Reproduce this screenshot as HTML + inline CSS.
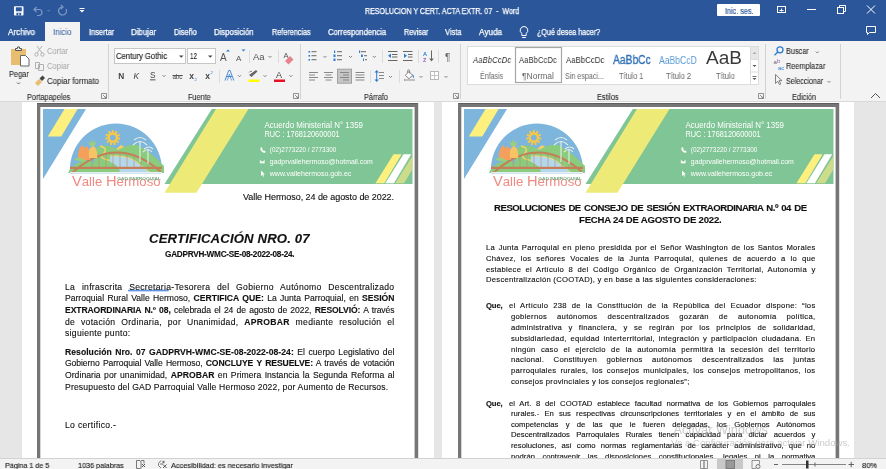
<!DOCTYPE html>
<html><head><meta charset="utf-8">
<style>
*{margin:0;padding:0;box-sizing:border-box}
html,body{width:886px;height:469px;overflow:hidden;background:#e6e6e6;font-family:"Liberation Sans",sans-serif}
.a{position:absolute;white-space:nowrap;will-change:transform}
.tab{color:#fff;font-size:9px;top:27px}
.rl{color:#444;font-size:9px}
.gl{color:#444;font-size:9px;top:91px}
.st{color:#444;font-size:8.5px;top:459px;line-height:11px}
.dl,.dj{position:absolute;white-space:nowrap;line-height:12px;color:#111;will-change:transform;-webkit-text-stroke:0.12px #111}
.dj{text-align:justify;text-align-last:justify}
b{font-weight:bold;color:#111}
u.sq{text-decoration:none}
</style></head><body>
<div id="root" style="position:absolute;left:0;top:0;width:886px;height:469px;will-change:transform"><!-- TITLE BAR -->
<div class="a" style="left:0;top:0;width:886px;height:41px;background:#2b579a"></div>
<svg class="a" style="left:0;top:0" width="886" height="41">
 <!-- save -->
 <rect x="14" y="6.2" width="9.5" height="9.3" rx="0.8" fill="#fff"/>
 <rect x="15.8" y="7.3" width="6" height="4" fill="#2b579a"/>
 <rect x="16.4" y="12.8" width="4.8" height="2.7" fill="#2b579a"/>
 <rect x="18" y="13.5" width="1.5" height="1.2" fill="#fff"/>
 <!-- undo -->
 <g fill="none" stroke="#7f9bc5" stroke-width="1.2">
  <path d="M34 9.5h5a3 3 0 0 1 0 6h-2M36.5 7l-2.5 2.5 2.5 2.5"/>
  <path d="M47.5 10l1.2 1.2 1.2-1.2" stroke-width="0.8"/>
  <path d="M66 9A4 4 0 1 1 62.5 7M60.8 4.8l2.2 2.2-2.2 2.2"/>
 </g>
 <g fill="#fff"><path d="M79.5 10h5l-2.5 2.5z"/><rect x="79.5" y="8" width="5" height="1"/></g>
 <!-- signin btn -->
 <rect x="717" y="4" width="43" height="12" rx="1" fill="#fff"/>
 <!-- window btns -->
 <g fill="none" stroke="#fff" stroke-width="1">
  <rect x="777.5" y="6.5" width="8" height="6"/>
  <path d="M779.5 10.5h4M781.5 8.5v3"/>
  <path d="M807 9.5h9"/>
  <rect x="837.5" y="7.5" width="6" height="6"/><path d="M839.5 7.5v-2h6v6h-2"/>
  <path d="M867 5.5l8 8M875 5.5l-8 8"/>
  <path d="M866.5 26.5h9v6h-6l-2 2v-2h-1z"/>
 </g>
</svg>
<!-- TABS -->
<div class="a" style="left:45px;top:22px;width:35px;height:20px;background:#f3f3f3"></div>
<svg class="a" style="left:518px;top:25px" width="12" height="14"><g fill="none" stroke="#fff" stroke-width="1"><path d="M6 1.5a3.8 3.8 0 0 0 -2.2 6.9v2.1h4.4v-2.1a3.8 3.8 0 0 0 -2.2 -6.9z"/><path d="M4.2 12.5h3.6"/></g></svg>
<!-- RIBBON -->
<div class="a" style="left:0;top:41px;width:886px;height:61px;background:#f3f3f3;border-bottom:1px solid #d8d8d8"></div>
<svg class="a" style="left:0;top:0" width="886" height="101">
 <g fill="#d2d2d2"><rect x="108" y="44" width="1" height="55"/><rect x="300" y="44" width="1" height="55"/><rect x="460" y="44" width="1" height="55"/><rect x="765" y="44" width="1" height="55"/><rect x="840" y="44" width="1" height="55"/></g>
 <g fill="#dcdcdc"><rect x="249" y="50" width="1" height="13"/><rect x="278" y="50" width="1" height="13"/><rect x="219" y="70" width="1" height="13"/><rect x="382" y="50" width="1" height="13"/><rect x="418" y="50" width="1" height="13"/><rect x="438" y="50" width="1" height="13"/><rect x="370" y="70" width="1" height="13"/><rect x="399" y="70" width="1" height="13"/></g>
 <!-- clipboard -->
 <rect x="11" y="49" width="15" height="16" fill="#e9bd6f"/>
 <path d="M15.5 50.5v-2h2v-1.5h2v1.5h2v2z" fill="#f3f3f3" stroke="#555" stroke-width="1"/>
 <path d="M20.5 55.5h5l3.5 3.5v7h-8.5z" fill="#fff" stroke="#666" stroke-width="1"/>
 <path d="M17 82.5l1.5 1.5 1.5-1.5" fill="none" stroke="#555" stroke-width="0.9"/>
 <!-- cut -->
 <g fill="none" stroke="#b0b0b0" stroke-width="1">
  <path d="M37 46l5 7M42 46l-5 7"/><circle cx="36.5" cy="54.5" r="1.7"/><circle cx="42.5" cy="54.5" r="1.7"/>
  <path d="M35.5 62.5h4v6h-4z M38.5 64.5h5v6h-5z"/>
 </g>
 <path d="M35 83l4-4 3 3-4 4z" fill="#e9bd6f"/><path d="M39.5 78.5l3-3 2.5 2.5-3 3z" fill="#444"/>
 <!-- font boxes -->
 <rect x="114.5" y="48.5" width="71" height="15" fill="#fff" stroke="#c6c6c6"/>
 <rect x="187.5" y="48.5" width="28" height="15" fill="#fff" stroke="#c6c6c6"/>
 <g fill="#444"><path d="M179 55.5h4.5l-2.25 2.25z"/><path d="M208 55.5h4.5l-2.25 2.25z"/></g>
 <!-- fuente row1 -->
 <g font-family="Liberation Sans" fill="#555">
  <text x="220" y="61" font-size="10">A</text>
  <text x="236" y="61" font-size="8">A</text>
  <text x="253" y="60" font-size="9.5">Aa</text>
  <text x="283.5" y="58" font-size="7.5">A</text>
 </g>
 <g fill="#2b7cd3"><path d="M226 51.5l2-2 2 2z"/><path d="M241.5 49.5h4l-2 2z"/></g>
 <path d="M285 61l5-5 3.5 3.5-5 5z" fill="#e8828c"/>
 <!-- fuente row2 -->
 <g font-family="Liberation Sans" fill="#444">
  <text x="118.3" y="78.6" font-size="8.3" font-weight="bold">N</text>
  <text x="133.5" y="78.6" font-size="8.3" font-style="italic">K</text>
  <text x="150" y="78.4" font-size="8.3">S</text>
  <text x="172.4" y="78.6" font-size="6.6" textLength="10" lengthAdjust="spacingAndGlyphs">abc</text>
  <text x="189.3" y="78.8" font-size="8.5" font-weight="bold">x</text>
  <text x="205.3" y="78.8" font-size="8.5" font-weight="bold">x</text>
  <text x="276" y="78" font-size="9">A</text>
 </g>
 <rect x="150" y="79.4" width="5.5" height="0.9" fill="#444"/>
 <rect x="172.4" y="75.2" width="10.4" height="0.8" fill="#444"/>
 <g font-family="Liberation Sans" fill="#2b7cd3" font-size="4"><text x="194.6" y="80.8">2</text><text x="210.6" y="74">2</text></g>
 <path d="M225 80.5l3.7-10h1.4l3.7 10M226.6 76.5h5.6" fill="none" stroke="#3c7fd0" stroke-width="0.9"/><path d="M227.2 80.5l2.2-6.3 2.2 6.3" fill="none" stroke="#3c7fd0" stroke-width="0.7"/>
 <path d="M249 75l7-5 1.5 1.5-6 5.5z" fill="#666"/><path d="M249 72.5q1-2 3-1" stroke="#666" fill="none" stroke-width="0.8"/>
 <rect x="248.5" y="79.5" width="11" height="2.5" fill="#ffff00"/>
 <rect x="274" y="79.5" width="11" height="2.5" fill="#e81123"/>
 <g fill="none" stroke="#666" stroke-width="0.8">
  <path d="M162.5 75.2l1.5 1.5 1.5-1.5M238 75.2l1.5 1.5 1.5-1.5M263.5 75.2l1.5 1.5 1.5-1.5M289.3 75.2l1.5 1.5 1.5-1.5M268.5 56l1.5 1.5 1.5-1.5"/>
  <path d="M323.5 56l1.5 1.5 1.5-1.5M349 56l1.5 1.5 1.5-1.5M372.8 56l1.5 1.5 1.5-1.5M389 76l1.5 1.5 1.5-1.5M419.5 76l1.5 1.5 1.5-1.5M444.5 76l1.5 1.5 1.5-1.5M815.8 51.5l1.5 1.5 1.5-1.5M827.5 81l1.5 1.5 1.5-1.5"/>
  <!-- launchers -->
  <path d="M101.5 93.5h5v5h-5zM103 95l3 3M106 96.5v1.5h-1.5" stroke="#777"/>
  <path d="M293.5 93.5h5v5h-5zM295 95l3 3M298 96.5v1.5h-1.5" stroke="#777"/>
  <path d="M453.5 93.5h5v5h-5zM455 95l3 3M458 96.5v1.5h-1.5" stroke="#777"/>
  <path d="M758.5 93.5h5v5h-5zM760 95l3 3M763 96.5v1.5h-1.5" stroke="#777"/>
  <path d="M871 98l4.5-4.5 4.5 4.5" stroke="#555" stroke-width="1"/>
 </g>
 <!-- parrafo row1 -->
 <g fill="#2b7cd3">
  <rect x="308.5" y="51" width="1.6" height="1.6"/><rect x="308.5" y="55" width="1.6" height="1.6"/><rect x="308.5" y="59" width="1.6" height="1.6"/>
  <rect x="334" y="50.5" width="1.2" height="2.5"/><rect x="333.5" y="54.5" width="2" height="2.5"/><rect x="333.5" y="58.5" width="2" height="2.5"/>
  <rect x="359" y="50.5" width="1.2" height="2.5"/><rect x="361" y="54.5" width="1.8" height="2.5"/><rect x="363" y="58.5" width="1" height="2.5"/>
  <path d="M388 55.8l3-2.3v4.6z"/><path d="M407 55.8l-3-2.3v4.6z"/>
  <text x="423" y="56" font-family="Liberation Sans" font-size="5.5" font-weight="bold">A</text>
 </g>
 <text x="423" y="62" font-family="Liberation Sans" font-size="5.5" font-weight="bold" fill="#9b59b6">Z</text>
 <g fill="#666">
  <rect x="311.5" y="51.2" width="5" height="1"/><rect x="311.5" y="55.2" width="5" height="1"/><rect x="311.5" y="59.2" width="5" height="1"/>
  <rect x="337" y="51.2" width="5" height="1"/><rect x="337" y="55.2" width="5" height="1"/><rect x="337" y="59.2" width="5" height="1"/>
  <rect x="361" y="51.2" width="5" height="1"/><rect x="364" y="55.2" width="3" height="1"/><rect x="365" y="59.2" width="2" height="1"/>
  <rect x="388" y="51" width="9.5" height="1"/><rect x="392" y="54" width="5.5" height="1"/><rect x="392" y="56.5" width="5.5" height="1"/><rect x="388" y="60" width="9.5" height="1"/>
  <rect x="403" y="51" width="9.5" height="1"/><rect x="408" y="54" width="4.5" height="1"/><rect x="408" y="56.5" width="4.5" height="1"/><rect x="403" y="60" width="9.5" height="1"/>
  <rect x="431" y="50.5" width="1" height="10"/><path d="M429.2 58.5l2.3 3 2.3-3z"/>
  <text x="445" y="61" font-family="Liberation Sans" font-size="10">¶</text>
 </g>
 <!-- parrafo row2 -->
 <rect x="337.5" y="69.2" width="14" height="14" fill="#c6c6c6" stroke="#a0a0a0"/>
 <g fill="#888">
  <rect x="309" y="72" width="9" height="1"/><rect x="309" y="74.5" width="6" height="1"/><rect x="309" y="77" width="9" height="1"/><rect x="309" y="79.5" width="6" height="1"/>
  <rect x="324" y="72" width="9" height="1"/><rect x="325.5" y="74.5" width="6" height="1"/><rect x="324" y="77" width="9" height="1"/><rect x="325.5" y="79.5" width="6" height="1"/>
  <rect x="340" y="72" width="9" height="1"/><rect x="343" y="74.5" width="6" height="1"/><rect x="340" y="77" width="9" height="1"/><rect x="343" y="79.5" width="6" height="1"/>
  <rect x="355.5" y="72" width="9" height="1"/><rect x="355.5" y="74.5" width="9" height="1"/><rect x="355.5" y="77" width="9" height="1"/><rect x="355.5" y="79.5" width="9" height="1"/>
  <rect x="379" y="72" width="5" height="1"/><rect x="379" y="75" width="5" height="1"/><rect x="379" y="78" width="5" height="1"/>
  <rect x="430.5" y="71.5" width="8" height="8" fill="#fff" stroke="#b0b0b0" stroke-width="0.9"/><rect x="434.2" y="71.5" width="0.8" height="8" fill="#b8b8b8"/><rect x="430.5" y="75.2" width="8" height="0.8" fill="#b8b8b8"/>
 </g>
 <g fill="#2b7cd3"><rect x="376.2" y="72" width="1" height="8"/><path d="M374.5 72.5l2.2-2.5 2.2 2.5zM374.5 79.5l2.2 2.5 2.2-2.5z"/></g>
 <path d="M405.3 75.2L409 71.6L412.6 75.2L409 78.8Z" fill="#fff" stroke="#666" stroke-width="0.8"/><path d="M407.6 73v-2.2a1 1 0 0 1 2 0v2.6" fill="none" stroke="#666" stroke-width="0.7"/><path d="M412.8 74.3q2.2 2.2 0.8 4.2q-1.6-1.4-0.8-4.2z" fill="#2b7cd3"/>
 <rect x="404.5" y="79.3" width="10" height="1.4" fill="#fff" stroke="#999" stroke-width="0.6"/>
 <!-- styles gallery -->
 <rect x="467.5" y="46.5" width="291" height="38" fill="#fff" stroke="#dcdcdc"/>
 <rect x="515.5" y="47.5" width="46" height="35" fill="#fff" stroke="#a6a6a6" stroke-width="1.2"/>
 <rect x="750" y="47" width="8" height="12.5" fill="#e6e6e6"/>
 <path d="M750.5 47v37" stroke="#dcdcdc"/><path d="M750.5 59.5h8M750.5 72h8" stroke="#dcdcdc"/>
 <g fill="#555"><path d="M752.5 65h4l-2 2z"/><rect x="752.5" y="76" width="4" height="0.8"/><path d="M752.5 78h4l-2 2z"/></g>
 <path d="M752.5 54l2-2 2 2z" fill="#aaa"/>
 <!-- edicion icons -->
 <g fill="none" stroke="#2b7cd3" stroke-width="1.3"><circle cx="780" cy="49.8" r="3"/><path d="M777.8 52l-3.3 3.3"/></g>
 <g font-family="Liberation Sans" font-size="6"><text x="773.5" y="64" fill="#666">a</text><text x="777" y="63" fill="#9b59b6">b</text><text x="778" y="70" fill="#2b7cd3">ac</text></g>
 <path d="M775.5 74.5v9l2.2-2.2 1.8 3.3 1.3-0.7-1.8-3.2h3z" fill="#f3f3f3" stroke="#666" stroke-width="0.8"/>
</svg>
<!-- DOCUMENT AREA -->
<div class="a" style="left:0;top:102px;width:886px;height:356px;background:#e6e6e6"></div>
<div class="a" style="left:21.5px;top:102px;width:411.5px;height:356px;background:#fff"></div>
<div class="a" style="left:442px;top:102px;width:411.5px;height:356px;background:#fff"></div>
<svg class="a" style="left:0;top:0" width="886" height="458">
<defs><clipPath id="lc"><rect x="60" y="110" width="110" height="63.5"/></clipPath></defs>
<g>
 <path d="M37 103H418.2V470H414.6V107H40.3V470H37Z" fill="#767676"/><path d="M37.5 103.5H417.7" stroke="#5e5e5e" stroke-width="1" fill="none"/>
 <path d="M43 109H86L43 179Z" fill="#7db5dc"/>
 <path d="M64.5 109H77.6L61.3 136.5H47.8Z" fill="#fdf07e"/>
 <path d="M211.8 109H412.5V184.1H164.5Z" fill="#80c595"/>
 <path d="M216 109H248.5L196.5 192.7H164.5Z" fill="#eeea78"/>
 <path d="M393.5 154.3H401.6L384.3 183.2H375.4Z" fill="#fdf07e"/>
 <path d="M403.5 154.3H411.2L393.9 183.2H385.3Z" fill="#fff"/>
 <path d="M412.5 156V169L404.1 183.2H395.2Z" fill="#cddc8a"/>
 <!-- logo -->
 
 <g clip-path="url(#lc)">
  <circle cx="115.9" cy="169.5" r="46" fill="#7db5dc"/>
  <path d="M115 150 L121 145 L128 149Z" fill="#f6cf63"/>
  <path d="M92 173 L97 147 Q107 143 118 150 Q128 144 137 145 Q151 152 164 166 V173Z" fill="#8acb7e"/>
  <path d="M68 173 Q72 162 90 159 L100 173Z" fill="#8acb7e"/>
  <path d="M100 146 Q108 148 104 153 Q98 158 108 160 Q118 161 120 166 Q122 170 128 174" fill="none" stroke="#f3d36a" stroke-width="1.5"/>
  <path d="M110 156 Q124 155 134 160 Q142 166 152 174 H120 Q121 166 110 162Z" fill="#b3d8ee"/>
  <path d="M110 156 Q124 155 134 160 Q142 166 152 174" fill="none" stroke="#f3d36a" stroke-width="1"/>
  <g stroke="#bc8a66" stroke-width="0.6" fill="none"><path d="M92 160V168M99 157V168M106 154V168M113 153V168M120 152V168M127 153V168M134 154V168M141 156V168M148 160V168"/></g>
  <path d="M71 174 Q116 132 161 172" fill="none" stroke="#c57e58" stroke-width="2"/>
  <rect x="70" y="166.8" width="92" height="2.2" fill="#c57e58"/>
  <rect x="70" y="172" width="92" height="2" fill="#e8f0f4"/>
  <path d="M78 160 Q77 150 82 145 Q85 150 87 146 Q91 150 90 160Z" fill="#f4a05c"/>
  <path d="M74 160 Q80 154 86 162Z" fill="#9ccf7c"/>
  <path d="M89 158 Q88 147 93 146 Q98 148 97 158Z" fill="#f7c465"/>
  <path d="M90 146 l-1.5-5 2.5 2 1.5-4 1.5 4 2-2 -1 5z" fill="#9ccf7c"/>
  <g stroke="#e6f0e2" stroke-width="1.1" fill="none"><path d="M140 162V141M134 140Q140 135 146 140M133 145Q140 138 147 145M148 164V149M144 149Q149 145 153 149M143 152Q148 147 152 152"/></g>
 </g>
 <circle cx="112.8" cy="137.6" r="4.2" fill="none" stroke="#f8c848" stroke-width="2.6"/>
 <circle cx="112.8" cy="137.6" r="6.5" fill="none" stroke="#f8c848" stroke-width="2" stroke-dasharray="2 1.6"/>
 <text x="72" y="186" font-family="Liberation Sans" fill="#f08a82" textLength="88.6" lengthAdjust="spacingAndGlyphs"><tspan font-size="14">V</tspan><tspan font-size="12.6">alle </tspan><tspan font-size="14">H</tspan><tspan font-size="12.6">ermoso</tspan></text>
 <text x="117.3" y="179.7" font-family="Liberation Sans" font-size="4.3" font-weight="bold" fill="#78ad84" textLength="43.5" lengthAdjust="spacingAndGlyphs">GAD PARROQUIAL</text>
 <!-- header text -->
 <g font-family="Liberation Sans" fill="#fff">
  <text x="264.5" y="127.7" font-size="9.4" textLength="98.5" lengthAdjust="spacingAndGlyphs">Acuerdo Ministerial N° 1359</text>
  <text x="264.5" y="137" font-size="9.4" textLength="75.1" lengthAdjust="spacingAndGlyphs">RUC : 1768120600001</text>
  <text x="269.8" y="152.3" font-size="6.6" textLength="66.5" lengthAdjust="spacingAndGlyphs">(02)2773220 / 2773300</text>
  <text x="269.8" y="164.1" font-size="6.6" textLength="103" lengthAdjust="spacingAndGlyphs">gadprvallehermoso@hotmail.com</text>
  <text x="269.8" y="175.9" font-size="6.6" textLength="81.6" lengthAdjust="spacingAndGlyphs">www.vallehermoso.gob.ec</text>
  <path d="M260.5 147.5q1-0.8 1.6 0.3l0.4 1q-0.5 0.6 0.2 1.4q0.8 0.8 1.4 0.3l1 0.5q1 0.6 0.2 1.5q-1.5 1-3.5-1q-2-2-1.3-4z"/>
  <path d="M259.8 159.5h5v4h-5z M259.8 159.5l2.5 2.2 2.5-2.2" stroke="#80c595" stroke-width="0.4"/>
  <path d="M261 170.5v5.5l1.3-1.3 1 2 0.8-0.4-1-2h1.8z"/>
 </g>
</g>

<g transform="translate(421,0)">
 <path d="M37 103H418.2V470H414.6V107H40.3V470H37Z" fill="#767676"/><path d="M37.5 103.5H417.7" stroke="#5e5e5e" stroke-width="1" fill="none"/>
 <path d="M43 109H86L43 179Z" fill="#7db5dc"/>
 <path d="M64.5 109H77.6L61.3 136.5H47.8Z" fill="#fdf07e"/>
 <path d="M211.8 109H412.5V184.1H164.5Z" fill="#80c595"/>
 <path d="M216 109H248.5L196.5 192.7H164.5Z" fill="#eeea78"/>
 <path d="M393.5 154.3H401.6L384.3 183.2H375.4Z" fill="#fdf07e"/>
 <path d="M403.5 154.3H411.2L393.9 183.2H385.3Z" fill="#fff"/>
 <path d="M412.5 156V169L404.1 183.2H395.2Z" fill="#cddc8a"/>
 <!-- logo -->
 
 <g clip-path="url(#lc)">
  <circle cx="115.9" cy="169.5" r="46" fill="#7db5dc"/>
  <path d="M115 150 L121 145 L128 149Z" fill="#f6cf63"/>
  <path d="M92 173 L97 147 Q107 143 118 150 Q128 144 137 145 Q151 152 164 166 V173Z" fill="#8acb7e"/>
  <path d="M68 173 Q72 162 90 159 L100 173Z" fill="#8acb7e"/>
  <path d="M100 146 Q108 148 104 153 Q98 158 108 160 Q118 161 120 166 Q122 170 128 174" fill="none" stroke="#f3d36a" stroke-width="1.5"/>
  <path d="M110 156 Q124 155 134 160 Q142 166 152 174 H120 Q121 166 110 162Z" fill="#b3d8ee"/>
  <path d="M110 156 Q124 155 134 160 Q142 166 152 174" fill="none" stroke="#f3d36a" stroke-width="1"/>
  <g stroke="#bc8a66" stroke-width="0.6" fill="none"><path d="M92 160V168M99 157V168M106 154V168M113 153V168M120 152V168M127 153V168M134 154V168M141 156V168M148 160V168"/></g>
  <path d="M71 174 Q116 132 161 172" fill="none" stroke="#c57e58" stroke-width="2"/>
  <rect x="70" y="166.8" width="92" height="2.2" fill="#c57e58"/>
  <rect x="70" y="172" width="92" height="2" fill="#e8f0f4"/>
  <path d="M78 160 Q77 150 82 145 Q85 150 87 146 Q91 150 90 160Z" fill="#f4a05c"/>
  <path d="M74 160 Q80 154 86 162Z" fill="#9ccf7c"/>
  <path d="M89 158 Q88 147 93 146 Q98 148 97 158Z" fill="#f7c465"/>
  <path d="M90 146 l-1.5-5 2.5 2 1.5-4 1.5 4 2-2 -1 5z" fill="#9ccf7c"/>
  <g stroke="#e6f0e2" stroke-width="1.1" fill="none"><path d="M140 162V141M134 140Q140 135 146 140M133 145Q140 138 147 145M148 164V149M144 149Q149 145 153 149M143 152Q148 147 152 152"/></g>
 </g>
 <circle cx="112.8" cy="137.6" r="4.2" fill="none" stroke="#f8c848" stroke-width="2.6"/>
 <circle cx="112.8" cy="137.6" r="6.5" fill="none" stroke="#f8c848" stroke-width="2" stroke-dasharray="2 1.6"/>
 <text x="72" y="186" font-family="Liberation Sans" fill="#f08a82" textLength="88.6" lengthAdjust="spacingAndGlyphs"><tspan font-size="14">V</tspan><tspan font-size="12.6">alle </tspan><tspan font-size="14">H</tspan><tspan font-size="12.6">ermoso</tspan></text>
 <text x="117.3" y="179.7" font-family="Liberation Sans" font-size="4.3" font-weight="bold" fill="#78ad84" textLength="43.5" lengthAdjust="spacingAndGlyphs">GAD PARROQUIAL</text>
 <!-- header text -->
 <g font-family="Liberation Sans" fill="#fff">
  <text x="264.5" y="127.7" font-size="9.4" textLength="98.5" lengthAdjust="spacingAndGlyphs">Acuerdo Ministerial N° 1359</text>
  <text x="264.5" y="137" font-size="9.4" textLength="75.1" lengthAdjust="spacingAndGlyphs">RUC : 1768120600001</text>
  <text x="269.8" y="152.3" font-size="6.6" textLength="66.5" lengthAdjust="spacingAndGlyphs">(02)2773220 / 2773300</text>
  <text x="269.8" y="164.1" font-size="6.6" textLength="103" lengthAdjust="spacingAndGlyphs">gadprvallehermoso@hotmail.com</text>
  <text x="269.8" y="175.9" font-size="6.6" textLength="81.6" lengthAdjust="spacingAndGlyphs">www.vallehermoso.gob.ec</text>
  <path d="M260.5 147.5q1-0.8 1.6 0.3l0.4 1q-0.5 0.6 0.2 1.4q0.8 0.8 1.4 0.3l1 0.5q1 0.6 0.2 1.5q-1.5 1-3.5-1q-2-2-1.3-4z"/>
  <path d="M259.8 159.5h5v4h-5z M259.8 159.5l2.5 2.2 2.5-2.2" stroke="#80c595" stroke-width="0.4"/>
  <path d="M261 170.5v5.5l1.3-1.3 1 2 0.8-0.4-1-2h1.8z"/>
 </g>
</g>

<rect x="128" y="289.7" width="40.7" height="1.7" fill="#6496e6"/>
</svg>
<div class="dl" style="left:242.60px;top:191.08px;font-size:9.0px;letter-spacing:-0.054px;">Valle Hermoso, 24 de agosto de 2022.</div>
<div class="dl" style="left:148.90px;top:233.23px;font-size:13.2px;letter-spacing:0.127px;font-weight:bold;font-style:italic;color:#111">CERTIFICACIÓN NRO. 07</div>
<div class="dl" style="left:164.70px;top:249.16px;font-size:8.2px;letter-spacing:-0.243px;font-weight:bold;color:#111">GADPRVH-WMC-SE-08-2022-08-24.</div>
<div class="dj" style="left:64.75px;top:280.62px;width:329.45px;font-size:8.6px;letter-spacing:0.298px;">La infrascrita <u class=sq>Secretaria</u>-Tesorera del Gobierno Autónomo Descentralizado</div>
<div class="dj" style="left:64.75px;top:292.32px;width:329.45px;font-size:8.6px;letter-spacing:-0.014px;">Parroquial Rural Valle Hermoso, <b>CERTIFICA QUE:</b> La Junta Parroquial, en <b>SESIÓN</b></div>
<div class="dj" style="left:64.75px;top:304.02px;width:329.45px;font-size:8.6px;letter-spacing:-0.101px;"><b>EXTRAORDINARIA N.º 08,</b> celebrada el 24 de agosto de 2022, <b>RESOLVIÓ:</b> A través</div>
<div class="dj" style="left:64.75px;top:315.72px;width:329.45px;font-size:8.6px;letter-spacing:0.298px;">de votación Ordinaria, por Unanimidad, <b>APROBAR</b> mediante resolución el</div>
<div class="dl" style="left:64.75px;top:327.42px;font-size:8.6px;letter-spacing:0.298px;">siguiente punto:</div>
<div class="dj" style="left:64.75px;top:345.62px;width:329.45px;font-size:8.6px;letter-spacing:0.042px;"><b>Resolución Nro. 07 GADPRVH-WMC-SE-08-2022-08-24:</b> El cuerpo Legislativo del</div>
<div class="dj" style="left:64.75px;top:357.37px;width:329.45px;font-size:8.6px;letter-spacing:-0.087px;">Gobierno Parroquial Valle Hermoso, <b>CONCLUYE Y RESUELVE:</b> A través de votación</div>
<div class="dj" style="left:64.75px;top:369.12px;width:329.45px;font-size:8.6px;letter-spacing:0.036px;">Ordinaria por unanimidad, <b>APROBAR</b> en Primera Instancia la Segunda Reforma al</div>
<div class="dl" style="left:64.75px;top:380.87px;font-size:8.6px;letter-spacing:0.167px;">Presupuesto del GAD Parroquial Valle Hermoso 2022, por Aumento de Recursos.</div>
<div class="dl" style="left:64.75px;top:418.82px;font-size:8.6px;letter-spacing:0.317px;">Lo certifico.-</div>
<div class="dj" style="left:493.80px;top:202.37px;width:312.60px;font-size:9.6px;letter-spacing:-0.464px;font-weight:bold;color:#111">RESOLUCIONES DE CONSEJO DE SESIÓN EXTRAORDINARIA N.º 04 DE</div>
<div class="dl" style="left:579.00px;top:214.07px;font-size:9.6px;letter-spacing:-0.219px;font-weight:bold;color:#111">FECHA 24 DE AGOSTO DE 2022.</div>
<div class="dj" style="left:486.10px;top:242.23px;width:329.50px;font-size:7.7px;letter-spacing:0.241px;">La Junta Parroquial en pleno presidida por el Señor Washington de los Santos Morales</div>
<div class="dj" style="left:486.10px;top:252.93px;width:329.50px;font-size:7.7px;letter-spacing:0.251px;">Chávez, los señores Vocales de la Junta Parroquial, quienes de acuerdo a lo que</div>
<div class="dj" style="left:486.10px;top:263.63px;width:329.50px;font-size:7.7px;letter-spacing:0.251px;">establece el Artículo 8 del Código Orgánico de Organización Territorial, Autonomía y</div>
<div class="dl" style="left:486.10px;top:274.33px;font-size:7.7px;letter-spacing:0.251px;">Descentralización (COOTAD), y en base a las siguientes consideraciones:</div>
<div class="dl" style="left:486.00px;top:300.43px;font-size:7.7px;letter-spacing:-0.148px;font-weight:bold;color:#111">Que,</div>
<div class="dj" style="left:508.80px;top:300.43px;width:306.50px;font-size:7.7px;letter-spacing:0.261px;">el Artículo 238 de la Constitución de la República del Ecuador dispone: “los</div>
<div class="dj" style="left:510.90px;top:311.23px;width:304.40px;font-size:7.7px;letter-spacing:0.261px;">gobiernos autónomos descentralizados gozarán de autonomía política,</div>
<div class="dj" style="left:510.90px;top:322.03px;width:304.40px;font-size:7.7px;letter-spacing:0.261px;">administrativa y financiera, y se regirán por los principios de solidaridad,</div>
<div class="dj" style="left:510.90px;top:332.83px;width:304.40px;font-size:7.7px;letter-spacing:0.261px;">subsidiariedad, equidad interterritorial, integración y participación ciudadana. En</div>
<div class="dj" style="left:510.90px;top:343.63px;width:304.40px;font-size:7.7px;letter-spacing:0.261px;">ningún caso el ejercicio de la autonomía permitirá la secesión del territorio</div>
<div class="dj" style="left:510.90px;top:354.43px;width:304.40px;font-size:7.7px;letter-spacing:0.261px;">nacional. Constituyen gobiernos autónomos descentralizados las juntas</div>
<div class="dj" style="left:510.90px;top:365.23px;width:304.40px;font-size:7.7px;letter-spacing:0.261px;">parroquiales rurales, los consejos municipales, los consejos metropolitanos, los</div>
<div class="dl" style="left:510.90px;top:376.03px;font-size:7.7px;letter-spacing:0.261px;">consejos provinciales y los consejos regionales”;</div>
<div class="dl" style="left:486.00px;top:397.53px;font-size:7.7px;letter-spacing:-0.148px;font-weight:bold;color:#111">Que,</div>
<div class="dj" style="left:508.80px;top:397.53px;width:306.50px;font-size:7.7px;letter-spacing:0.000px;">el Art. 8 del COOTAD establece facultad normativa de los Gobiernos parroquiales</div>
<div class="dj" style="left:510.90px;top:408.13px;width:304.40px;font-size:7.7px;letter-spacing:0.000px;">rurales.- En sus respectivas circunscripciones territoriales y en el ámbito de sus</div>
<div class="dj" style="left:510.90px;top:418.73px;width:304.40px;font-size:7.7px;letter-spacing:0.000px;">competencias y de las que le fueren delegadas, los Gobiernos Autónomos</div>
<div class="dj" style="left:510.90px;top:429.33px;width:304.40px;font-size:7.7px;letter-spacing:0.000px;">Descentralizados Parroquiales Rurales tienen capacidad para dictar acuerdos y</div>
<div class="dj" style="left:510.90px;top:439.93px;width:304.40px;font-size:7.7px;letter-spacing:0.000px;">resoluciones, así como normas reglamentarias de carácter administrativo, que no</div>
<div class="dj" style="left:510.90px;top:450.53px;width:304.40px;font-size:7.7px;letter-spacing:0.000px;">podrán contravenir las disposiciones constitucionales, legales ni la normativa</div><svg class="a" style="left:0;top:0" width="886" height="458"><g font-family="Liberation Sans" fill="#a0a0a0" fill-opacity="0.55">
 <text x="673.4" y="433.7" font-size="12.6" textLength="94.4" lengthAdjust="spacingAndGlyphs">Activar Windows</text>
 <text x="671" y="446" font-size="8.6" textLength="179" lengthAdjust="spacingAndGlyphs">Ve a Configuración para activar Windows.</text>
</g>
</svg>
<!-- STATUS BAR -->
<div class="a" style="left:0;top:458px;width:886px;height:11px;background:#f3f3f3;border-top:1px solid #d2d2d2"></div>
<div class="a" style="left:717px;top:459px;width:25.5px;height:10px;background:#c8c8c8"></div>
<svg class="a" style="left:0;top:458px" width="886" height="11">
 <g fill="none" stroke="#6a6a6a" stroke-width="0.9">
  <path d="M136.5 2.5h3.5l1 1v7M140.5 3.5l1-1h2.5v3M136.5 2.5v8h4"/>
  <path d="M142 6l3 3M145 6l-3 3" stroke="#444"/>
  <path d="M161 2.5l-2.5 3v2l2.5 2.5M160 6h3"/>
  <circle cx="163.5" cy="4" r="0.8" fill="#444"/>
  <path d="M163 6.5l3.5 3.5M166.5 6.5l-3.5 3.5" stroke="#444"/>
  <path d="M700.5 2.5h3.5v8h-3.5zM704 2.5h3.5v8h-3.5z" stroke="#888"/>
  <rect x="726" y="2.5" width="8.5" height="8" fill="#999" stroke="#777"/>
  <path d="M752 2.5h7.5v4M752 2.5v8h4" stroke="#888"/>
  <circle cx="758" cy="8.5" r="2" stroke="#666"/>
  <path d="M774 6.5h4M848.5 6.5h5.5M851.2 3.8v5.5" stroke="#555"/>
  <path d="M782 6.5h64" stroke="#777"/>
 </g>
 <rect x="806" y="2.5" width="2.5" height="8" fill="#333"/>
 <rect x="814.5" y="4.5" width="1" height="4" fill="#666"/>
</svg>
<div class="a" style="left:365.20px;top:6.11px;line-height:12px;font-size:8.2px;color:#ffffff;transform:scaleX(0.861);transform-origin:0 0;-webkit-text-stroke:0.25px #fff">RESOLUCION Y CERT. ACTA EXTR. 07 &nbsp;- &nbsp;Word</div>
<div class="a" style="left:724.90px;top:5.11px;line-height:12px;font-size:8.5px;color:#2b579a;transform:scaleX(0.850);transform-origin:0 0;-webkit-text-stroke:0.15px #2b579a">Inic. ses.</div>
<div class="a" style="left:8.00px;top:26.21px;line-height:12px;font-size:8.3px;color:#ffffff;transform:scaleX(0.976);transform-origin:0 0;-webkit-text-stroke:0.25px #fff">Archivo</div>
<div class="a" style="left:52.50px;top:26.21px;line-height:12px;font-size:8.3px;color:#2b579a;transform:scaleX(0.955);transform-origin:0 0;">Inicio</div>
<div class="a" style="left:88.70px;top:26.21px;line-height:12px;font-size:8.3px;color:#ffffff;transform:scaleX(0.899);transform-origin:0 0;-webkit-text-stroke:0.25px #fff">Insertar</div>
<div class="a" style="left:131.40px;top:26.21px;line-height:12px;font-size:8.3px;color:#ffffff;transform:scaleX(0.951);transform-origin:0 0;-webkit-text-stroke:0.25px #fff">Dibujar</div>
<div class="a" style="left:173.70px;top:26.21px;line-height:12px;font-size:8.3px;color:#ffffff;transform:scaleX(0.879);transform-origin:0 0;-webkit-text-stroke:0.25px #fff">Diseño</div>
<div class="a" style="left:214.40px;top:26.21px;line-height:12px;font-size:8.3px;color:#ffffff;transform:scaleX(0.933);transform-origin:0 0;-webkit-text-stroke:0.25px #fff">Disposición</div>
<div class="a" style="left:271.60px;top:26.21px;line-height:12px;font-size:8.3px;color:#ffffff;transform:scaleX(0.874);transform-origin:0 0;-webkit-text-stroke:0.25px #fff">Referencias</div>
<div class="a" style="left:328.30px;top:26.21px;line-height:12px;font-size:8.3px;color:#ffffff;transform:scaleX(0.921);transform-origin:0 0;-webkit-text-stroke:0.25px #fff">Correspondencia</div>
<div class="a" style="left:403.80px;top:26.21px;line-height:12px;font-size:8.3px;color:#ffffff;transform:scaleX(0.868);transform-origin:0 0;-webkit-text-stroke:0.25px #fff">Revisar</div>
<div class="a" style="left:445.00px;top:26.21px;line-height:12px;font-size:8.3px;color:#ffffff;transform:scaleX(0.896);transform-origin:0 0;-webkit-text-stroke:0.25px #fff">Vista</div>
<div class="a" style="left:478.60px;top:26.21px;line-height:12px;font-size:8.3px;color:#ffffff;transform:scaleX(0.983);transform-origin:0 0;-webkit-text-stroke:0.25px #fff">Ayuda</div>
<div class="a" style="left:537.20px;top:26.21px;line-height:12px;font-size:8.3px;color:#ffffff;transform:scaleX(0.859);transform-origin:0 0;-webkit-text-stroke:0.25px #fff">¿Qué desea hacer?</div>
<div class="a" style="left:8.90px;top:67.51px;line-height:12px;font-size:8.3px;color:#2a2a2a;transform:scaleX(0.890);transform-origin:0 0;-webkit-text-stroke:0.1px #2a2a2a">Pegar</div>
<div class="a" style="left:46.90px;top:45.11px;line-height:12px;font-size:8.3px;color:#a6a6a6;transform:scaleX(0.911);transform-origin:0 0;">Cortar</div>
<div class="a" style="left:46.90px;top:60.11px;line-height:12px;font-size:8.3px;color:#a6a6a6;transform:scaleX(0.916);transform-origin:0 0;">Copiar</div>
<div class="a" style="left:46.90px;top:75.01px;line-height:12px;font-size:8.3px;color:#2a2a2a;transform:scaleX(0.948);transform-origin:0 0;-webkit-text-stroke:0.1px #2a2a2a">Copiar formato</div>
<div class="a" style="left:27.10px;top:90.51px;line-height:12px;font-size:8.3px;color:#2a2a2a;transform:scaleX(0.885);transform-origin:0 0;-webkit-text-stroke:0.1px #2a2a2a">Portapapeles</div>
<div class="a" style="left:116.40px;top:50.41px;line-height:12px;font-size:8.3px;color:#222;transform:scaleX(0.922);transform-origin:0 0;-webkit-text-stroke:0.15px #222">Century Gothic</div>
<div class="a" style="left:190.00px;top:50.41px;line-height:12px;font-size:8.3px;color:#222;transform:scaleX(0.769);transform-origin:0 0;-webkit-text-stroke:0.15px #222">12</div>
<div class="a" style="left:188.30px;top:90.51px;line-height:12px;font-size:8.3px;color:#2a2a2a;transform:scaleX(0.878);transform-origin:0 0;-webkit-text-stroke:0.1px #2a2a2a">Fuente</div>
<div class="a" style="left:364.00px;top:90.51px;line-height:12px;font-size:8.3px;color:#2a2a2a;transform:scaleX(0.878);transform-origin:0 0;-webkit-text-stroke:0.1px #2a2a2a">Párrafo</div>
<div class="a" style="left:479.70px;top:70.71px;line-height:12px;font-size:8.2px;color:#666;transform:scaleX(0.867);transform-origin:0 0;">Énfasis</div>
<div class="a" style="left:522.00px;top:70.71px;line-height:12px;font-size:8.2px;color:#666;transform:scaleX(1.039);transform-origin:0 0;">¶Normal</div>
<div class="a" style="left:565.00px;top:70.71px;line-height:12px;font-size:8.2px;color:#666;transform:scaleX(0.874);transform-origin:0 0;">Sin espaci...</div>
<div class="a" style="left:619.30px;top:70.71px;line-height:12px;font-size:8.2px;color:#666;transform:scaleX(0.890);transform-origin:0 0;">Título 1</div>
<div class="a" style="left:665.70px;top:70.71px;line-height:12px;font-size:8.2px;color:#666;transform:scaleX(0.915);transform-origin:0 0;">Título 2</div>
<div class="a" style="left:716.00px;top:70.71px;line-height:12px;font-size:8.2px;color:#666;transform:scaleX(0.913);transform-origin:0 0;">Título</div>
<div class="a" style="left:597.20px;top:90.51px;line-height:12px;font-size:8.3px;color:#2a2a2a;transform:scaleX(0.884);transform-origin:0 0;-webkit-text-stroke:0.1px #2a2a2a">Estilos</div>
<div class="a" style="left:472.90px;top:54.13px;line-height:12px;font-size:9.4px;color:#333;transform:scaleX(0.831);transform-origin:0 0;font-style:italic">AaBbCcDc</div>
<div class="a" style="left:519.30px;top:54.13px;line-height:12px;font-size:9.4px;color:#333;transform:scaleX(0.822);transform-origin:0 0;">AaBbCcDc</div>
<div class="a" style="left:565.70px;top:54.13px;line-height:12px;font-size:9.4px;color:#333;transform:scaleX(0.835);transform-origin:0 0;">AaBbCcDc</div>
<div class="a" style="left:612.90px;top:53.87px;line-height:12px;font-size:12.5px;color:#2e6fb5;transform:scaleX(0.824);transform-origin:0 0;-webkit-text-stroke:0.35px #2e6fb5">AaBbCc</div>
<div class="a" style="left:659.30px;top:53.84px;line-height:12px;font-size:10.5px;color:#5b9bd5;transform:scaleX(0.818);transform-origin:0 0;">AaBbCcD</div>
<div class="a" style="left:706.00px;top:52.44px;line-height:12px;font-size:17.5px;color:#3a3a3a;transform:scaleX(1.088);transform-origin:0 0;">AaB</div>
<div class="a" style="left:785.70px;top:45.41px;line-height:12px;font-size:8.3px;color:#2a2a2a;transform:scaleX(0.883);transform-origin:0 0;-webkit-text-stroke:0.1px #2a2a2a">Buscar</div>
<div class="a" style="left:785.70px;top:60.21px;line-height:12px;font-size:8.3px;color:#2a2a2a;transform:scaleX(0.879);transform-origin:0 0;-webkit-text-stroke:0.1px #2a2a2a">Reemplazar</div>
<div class="a" style="left:785.70px;top:75.01px;line-height:12px;font-size:8.3px;color:#2a2a2a;transform:scaleX(0.860);transform-origin:0 0;-webkit-text-stroke:0.1px #2a2a2a">Seleccionar</div>
<div class="a" style="left:791.50px;top:90.51px;line-height:12px;font-size:8.3px;color:#2a2a2a;transform:scaleX(0.885);transform-origin:0 0;-webkit-text-stroke:0.1px #2a2a2a">Edición</div>
<div class="a" style="left:5.40px;top:459.71px;line-height:12px;font-size:7.9px;color:#222;transform:scaleX(0.910);transform-origin:0 0;-webkit-text-stroke:0.15px #222">Página 1 de 5</div>
<div class="a" style="left:78.00px;top:459.71px;line-height:12px;font-size:7.9px;color:#222;transform:scaleX(0.914);transform-origin:0 0;-webkit-text-stroke:0.15px #222">1036 palabras</div>
<div class="a" style="left:170.80px;top:459.71px;line-height:12px;font-size:7.9px;color:#222;transform:scaleX(0.929);transform-origin:0 0;-webkit-text-stroke:0.15px #222">Accesibilidad: es necesario investigar</div>
<div class="a" style="left:862.00px;top:459.71px;line-height:12px;font-size:7.9px;color:#222;transform:scaleX(0.950);transform-origin:0 0;-webkit-text-stroke:0.15px #222">80%</div></div></body></html>
